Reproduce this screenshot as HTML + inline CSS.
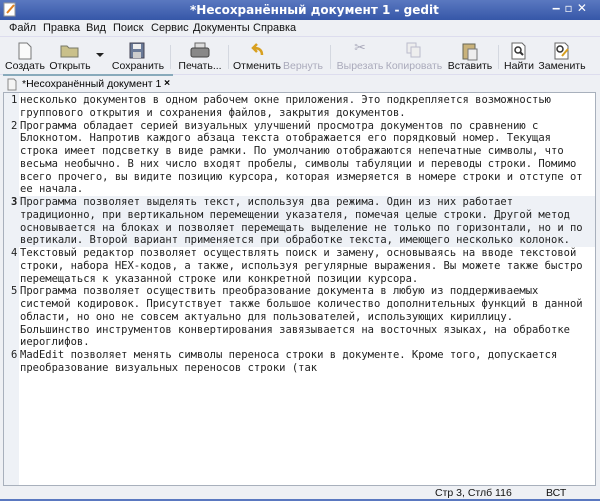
<!DOCTYPE html><html><head><meta charset="utf-8"><style>
body{margin:0;width:600px;height:501px;overflow:hidden;background:#eef0f4;font-family:"Liberation Sans","DejaVu Sans",sans-serif;position:relative}
.title{position:absolute;left:0;top:0;width:600px;height:20px;background:linear-gradient(#5a78c0,#3657a8);color:#fff;font-weight:bold;font-size:12px;font-family:"DejaVu Sans",sans-serif}
.title span{position:absolute;left:190px;top:3px}
.menu{position:absolute;top:20px;left:0;width:600px;height:16px;font-size:11px;color:#111}
.menu span{position:absolute;top:2px}
.tb{position:absolute;top:36px;left:0;width:600px;height:37px;border-top:1px solid #dde;border-bottom:1px solid #dde}
.btn{position:absolute;top:23px;font-size:10.5px;color:#111;transform:translateX(-50%);white-space:nowrap}
.dis{color:#aab}
.ic{position:absolute;top:5px;width:16px;height:16px}
.sep{position:absolute;top:8px;width:1px;height:24px;background:#d4d8e0}
.tab{position:absolute;top:74px;left:3px;width:170px;height:18px;border-top:2px solid #8ab;background:#eef0f4;font-size:10.5px}
.ed{position:absolute;left:3px;top:92px;width:591px;height:392px;background:#fff;border:1px solid #a8b0bc}
.gut{position:absolute;left:0;top:0;width:15px;height:100%;background:#eef1f6}
.txt{position:absolute;left:0;top:1px;font-family:"DejaVu Sans Mono","Liberation Mono",monospace;font-size:10.5px;line-height:12.75px;color:#222;white-space:pre;width:591px}
.p{position:relative;padding-left:16px}
.p b{position:absolute;left:7px;font-weight:normal}
.cur{background:#eef1f6}
.cur b{font-weight:bold}
.st{position:absolute;top:485px;left:0;width:600px;height:14px;font-size:10.5px;color:#111;border-bottom:2px solid #5a78c0}
</style></head><body>
<div class="title"><svg style="position:absolute;left:3px;top:2px" width="14" height="15"><rect x="1" y="1" width="11" height="13" fill="#fff" stroke="#999"/><path d="M4 11 L11 3" stroke="#e08020" stroke-width="2"/></svg><span>*Несохранённый документ 1 - gedit</span>
<span style="left:552px;top:1px">‒ ▫ ✕</span></div>
<div class="menu"><span style="left:9px">Файл</span><span style="left:43px">Правка</span><span style="left:86px">Вид</span><span style="left:113px">Поиск</span><span style="left:151px">Сервис</span><span style="left:193px">Документы</span><span style="left:253px">Справка</span></div>
<div class="tb">
<svg class="ic" style="left:18px;width:14px;height:18px"><path d="M1 1h8l4 4v12H1z" fill="#fafafa" stroke="#777"/></svg><div class="btn" style="left:25px">Создать</div>
<svg class="ic" style="left:60px;width:20px"><path d="M1 4h6l2 2h9v9H1z" fill="#c9c08a" stroke="#776"/></svg><div class="btn" style="left:70px">Открыть</div>
<div style="position:absolute;left:96px;top:16px;border:4px solid transparent;border-top:4px solid #222"></div>
<svg class="ic" style="left:129px;width:16px;height:18px"><rect x="1" y="1" width="14" height="15" fill="#6a7a98" stroke="#445"/><rect x="4" y="2" width="8" height="5" fill="#eee"/><rect x="4" y="10" width="8" height="6" fill="#ccc"/></svg><div class="btn" style="left:138px">Сохранить</div>
<div class="sep" style="left:170px"></div>
<svg class="ic" style="left:190px;width:20px;height:18px"><rect x="5" y="1" width="10" height="6" fill="#ddd" stroke="#666"/><rect x="1" y="6" width="18" height="9" rx="2" fill="#888" stroke="#444"/></svg><div class="btn" style="left:200px">Печать...</div>
<div class="sep" style="left:228px"></div>
<svg class="ic" style="left:250px"><path d="M12 13c0-5-3-7-8-7M7 2L3 6l4 4" fill="none" stroke="#d8a020" stroke-width="2.5"/></svg><div class="btn" style="left:257px">Отменить</div>
<div class="btn dis" style="left:303px">Вернуть</div>
<div class="sep" style="left:330px"></div>
<div class="btn dis" style="left:360px;top:2px;font-size:14px">✂</div><div class="btn dis" style="left:360px">Вырезать</div>
<svg class="ic" style="left:406px"><rect x="1" y="1" width="9" height="10" fill="#eee" stroke="#bbc"/><rect x="5" y="5" width="9" height="10" fill="#eee" stroke="#bbc"/></svg><div class="btn dis" style="left:414px">Копировать</div>
<svg class="ic" style="left:462px;height:19px"><rect x="1" y="2" width="12" height="15" fill="#c9b27a" stroke="#665"/><rect x="6" y="7" width="9" height="11" fill="#eee" stroke="#777"/></svg><div class="btn" style="left:470px">Вставить</div>
<div class="sep" style="left:498px"></div>
<svg class="ic" style="left:511px;height:18px"><path d="M1 1h10l3 3v13H1z" fill="#fff" stroke="#666"/><circle cx="7" cy="8" r="3" fill="none" stroke="#333" stroke-width="1.5"/><path d="M9 10l3 3" stroke="#333" stroke-width="2"/></svg><div class="btn" style="left:519px">Найти</div>
<svg class="ic" style="left:554px;height:18px"><path d="M1 1h10l3 3v13H1z" fill="#fff" stroke="#666"/><circle cx="6" cy="7" r="3" fill="none" stroke="#333" stroke-width="1.5"/><path d="M8 14l6-7" stroke="#d8a020" stroke-width="2"/></svg><div class="btn" style="left:562px">Заменить</div>
</div>
<div class="tab"><svg style="position:absolute;left:4px;top:2px" width="10" height="13"><path d="M1 1h6l2 2v9H1z" fill="#f4f4f4" stroke="#888"/></svg><span style="position:absolute;left:19px;top:2px">*Несохранённый документ 1</span><span style="position:absolute;left:161px;top:1px;font-weight:bold">×</span></div>
<div class="ed"><div class="gut"></div><div class="txt"><div class="p"><b>1</b>несколько документов в одном рабочем окне приложения. Это подкрепляется возможностью
группового открытия и сохранения файлов, закрытия документов.</div><div class="p"><b>2</b>Программа обладает серией визуальных улучшений просмотра документов по сравнению с
Блокнотом. Напротив каждого абзаца текста отображается его порядковый номер. Текущая
строка имеет подсветку в виде рамки. По умолчанию отображаются непечатные символы, что
весьма необычно. В них число входят пробелы, символы табуляции и переводы строки. Помимо
всего прочего, вы видите позицию курсора, которая измеряется в номере строки и отступе от
ее начала.</div><div class="p cur"><b>3</b>Программа позволяет выделять текст, используя два режима. Один из них работает
традиционно, при вертикальном перемещении указателя, помечая целые строки. Другой метод
основывается на блоках и позволяет перемещать выделение не только по горизонтали, но и по
вертикали. Второй вариант применяется при обработке текста, имеющего несколько колонок.</div><div class="p"><b>4</b>Текстовый редактор позволяет осуществлять поиск и замену, основываясь на вводе текстовой
строки, набора HEX-кодов, а также, используя регулярные выражения. Вы можете также быстро
перемещаться к указанной строке или конкретной позиции курсора.</div><div class="p"><b>5</b>Программа позволяет осуществить преобразование документа в любую из поддерживаемых
системой кодировок. Присутствует также большое количество дополнительных функций в данной
области, но оно не совсем актуально для пользователей, использующих кириллицу.
Большинство инструментов конвертирования завязывается на восточных языках, на обработке
иероглифов.</div><div class="p"><b>6</b>MadEdit позволяет менять символы переноса строки в документе. Кроме того, допускается
преобразование визуальных переносов строки (так</div></div></div>
<div class="st"><span style="position:absolute;left:435px;top:2px">Стр 3, Стлб 116</span><span style="position:absolute;left:546px;top:2px">ВСТ</span></div>
</body></html>
